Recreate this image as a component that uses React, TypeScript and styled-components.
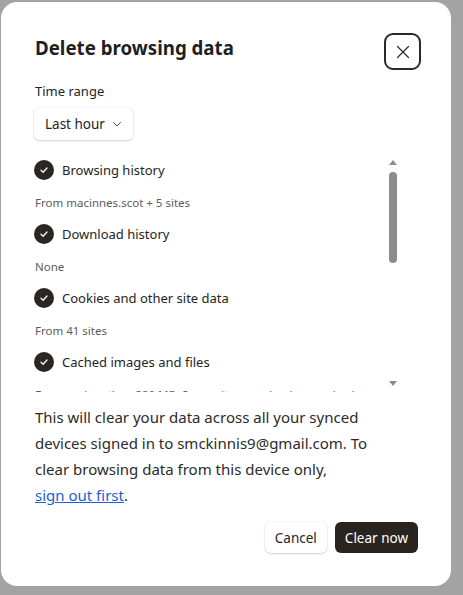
import React from 'react';
import styled, { createGlobalStyle } from 'styled-components';

const Global = createGlobalStyle`
  html, body {
    margin: 0;
    padding: 0;
    background: #a3a3a3;
    font-family: "Noto Sans", "Open Sans", sans-serif;
    color: #242424;
  }
`;

const Page = styled.div`
  width: 463px;
  height: 595px;
  padding: 2px 0 0 1px;
  box-sizing: border-box;
  overflow: hidden;
`;

const Dialog = styled.div`
  width: 450px;
  height: 584px;
  background: #fff;
  border-radius: 16px;
  box-sizing: border-box;
  padding: 30px 30px 0 33px;
  display: flex;
  flex-direction: column;
`;

const Header = styled.div`
  display: flex;
  justify-content: space-between;
  align-items: flex-start;
`;

const Title = styled.h1`
  margin: 3px 0 0 1px;
  font-size: 18.7px;
  font-weight: 700;
  color: #1f1f1f;
`;

const CloseButton = styled.button`
  width: 37px;
  height: 37px;
  margin: 1px 0 0 0;
  border: 2px solid #2a2a2a;
  border-radius: 9px;
  background: #fff;
  display: flex;
  align-items: center;
  justify-content: center;
  padding: 0;
`;

const Label = styled.div`
  margin: 12px 0 0 1px;
  font-size: 13px;
  color: #242424;
`;

const Select = styled.button`
  align-self: flex-start;
  margin-top: 8px;
  height: 32px;
  padding: 0 11px;
  border: none;
  border-radius: 5px;
  background: #fff;
  box-shadow: 0 0 2px rgba(0, 0, 0, 0.12), 0 1px 2px rgba(0, 0, 0, 0.14);
  display: flex;
  align-items: center;
  gap: 7px;
  font-family: inherit;
  font-size: 13.5px;
  color: #242424;
`;

const ListArea = styled.div`
  margin-top: 14px;
  height: 238px;
  display: flex;
`;

const List = styled.div`
  flex: 1;
  overflow: hidden;
`;

const Item = styled.div`
  display: flex;
  align-items: center;
  gap: 8px;
  height: 32px;
  font-size: 13px;
  color: #242424;
`;

const Check = styled.span`
  width: 20px;
  height: 20px;
  border-radius: 50%;
  background: #2b2624;
  display: flex;
  align-items: center;
  justify-content: center;
  flex-shrink: 0;
`;

const Sub = styled.div`
  margin-left: 1px;
  padding-top: 9px;
  max-width: 340px;
  min-height: 23px;
  font-size: 11.5px;
  line-height: 16px;
  color: #5c5c5c;
`;

const Scrollbar = styled.div`
  width: 14px;
  margin-right: 21px;
  display: flex;
  flex-direction: column;
  align-items: center;
`;

const Arrow = styled.div<{ $down?: boolean }>`
  width: 0;
  height: 0;
  border-left: 4px solid transparent;
  border-right: 4px solid transparent;
  ${(p) => (p.$down ? 'border-top: 5px solid #8c8c8c;' : 'border-bottom: 5px solid #8c8c8c;')}
  margin: ${(p) => (p.$down ? 'auto 0 6px' : '6px 0 0')};
`;

const Thumb = styled.div`
  width: 8px;
  height: 91px;
  margin-top: 7px;
  border-radius: 4px;
  background: #8c8c8c;
`;

const Info = styled.p`
  margin: 12px 0 0 1px;
  font-size: 15px;
  line-height: 26px;
  color: #2b2b2b;
  width: 355px;
`;

const Link = styled.a`
  color: #1a5fd6;
  text-decoration: underline;
  white-space: nowrap;
`;

const Footer = styled.div`
  display: flex;
  justify-content: flex-end;
  gap: 8px;
  margin-top: 14px;
  padding-right: 3px;
`;

const Button = styled.button<{ $primary?: boolean }>`
  height: 31px;
  padding: 0 10px;
  border: none;
  border-radius: 6px;
  font-family: inherit;
  font-size: 13.5px;
  background: ${(p) => (p.$primary ? '#2a2421' : '#fff')};
  color: ${(p) => (p.$primary ? '#fff' : '#242424')};
  box-shadow: ${(p) => (p.$primary ? 'none' : '0 0 2px rgba(0,0,0,0.12), 0 1px 2px rgba(0,0,0,0.14)')};
`;

const CheckIcon = () => (
  <svg width="10" height="10" viewBox="0 0 10 10">
    <path d="M2 5.2 L4.1 7.2 L8 3" fill="none" stroke="#fff" strokeWidth="1.3" strokeLinecap="round" strokeLinejoin="round" />
  </svg>
);

const items = [
  { label: 'Browsing history', sub: 'From macinnes.scot + 5 sites' },
  { label: 'Download history', sub: 'None' },
  { label: 'Cookies and other site data', sub: 'From 41 sites' },
  { label: 'Cached images and files', sub: 'Frees up less than 320 MB. Some sites may load more slowly on your next visit.' },
];

export default function App() {
  return (
    <Page>
      <Global />
      <Dialog>
        <Header>
          <Title>Delete browsing data</Title>
          <CloseButton aria-label="Close">
            <svg width="14" height="14" viewBox="0 0 14 14">
              <path d="M1.5 1.5 L12.5 12.5 M12.5 1.5 L1.5 12.5" stroke="#2a2a2a" strokeWidth="1.2" strokeLinecap="round" />
            </svg>
          </CloseButton>
        </Header>
        <Label>Time range</Label>
        <Select>
          Last hour
          <svg width="10" height="10" viewBox="0 0 10 10">
            <path d="M1.5 3.5 L5 7 L8.5 3.5" fill="none" stroke="#555" strokeWidth="1" strokeLinecap="round" />
          </svg>
        </Select>
        <ListArea>
          <List>
            {items.map((it) => (
              <React.Fragment key={it.label}>
                <Item>
                  <Check>
                    <CheckIcon />
                  </Check>
                  {it.label}
                </Item>
                <Sub>{it.sub}</Sub>
              </React.Fragment>
            ))}
          </List>
          <Scrollbar>
            <Arrow />
            <Thumb />
            <Arrow $down />
          </Scrollbar>
        </ListArea>
        <Info>
          This will clear your data across all your synced devices signed in to smckinnis9@gmail.com. To clear
          browsing data from this device only, <Link href="#">sign out first</Link>.
        </Info>
        <Footer>
          <Button>Cancel</Button>
          <Button $primary>Clear now</Button>
        </Footer>
      </Dialog>
    </Page>
  );
}
